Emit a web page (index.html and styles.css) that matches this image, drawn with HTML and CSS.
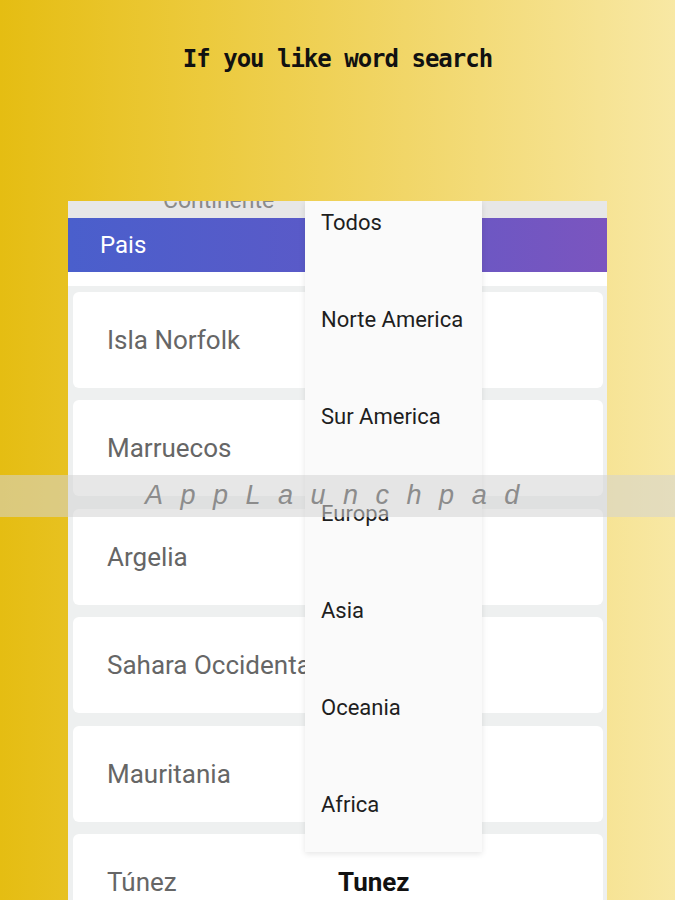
FILE: index.html
```html
<!DOCTYPE html>
<html lang="en">
<head>
    <meta charset="UTF-8">
    <meta name="viewport" content="width=device-width, initial-scale=1.0">
    <title>Word Search - Paises</title>
    <link rel="stylesheet" href="styles.css">
</head>
<body>
    <div class="page">
        <h1 class="title">If you like word search</h1>

        <div class="phone">
            <div class="top-strip">
                <span class="strip-label">Continente</span>
            </div>
            <div class="tabs">
                <span class="tab-label">Pais</span>
            </div>

            <div class="list">
                <div class="card"><span class="name">Isla Norfolk</span></div>
                <div class="card"><span class="name">Marruecos</span></div>
                <div class="card"><span class="name">Argelia</span></div>
                <div class="card"><span class="name">Sahara Occidental</span></div>
                <div class="card"><span class="name">Mauritania</span></div>
                <div class="card">
                    <span class="name">Túnez</span>
                    <span class="answer">Tunez</span>
                </div>
            </div>

            <!-- continent dropdown, open -->
            <div class="dropdown">
                <ul class="menu">
                    <li>Todos</li>
                    <li>Norte America</li>
                    <li>Sur America</li>
                    <li>Europa</li>
                    <li>Asia</li>
                    <li>Oceania</li>
                    <li>Africa</li>
                </ul>
            </div>
        </div>

        <div class="watermark">AppLaunchpad</div>
    </div>
</body>
</html>
```

FILE: styles.css
```css
html, body {
    margin: 0;
    padding: 0;
}

body {
    font-family: Roboto, "Noto Sans", sans-serif;
}

.page {
    position: relative;
    width: 675px;
    height: 900px;
    overflow: hidden;
    background: linear-gradient(90deg, #e5bd12 0%, #ecca3c 30%, #f1d668 60%, #f8e8a4 100%);
}

.title {
    margin: 0;
    padding-top: 45px;
    height: 201px;
    box-sizing: border-box;
    text-align: center;
    font-family: "DejaVu Sans Mono", monospace;
    font-weight: bold;
    font-size: 24px;
    letter-spacing: -1px;
    color: #111;
}

.phone {
    position: relative;
    margin: 0 68px;
    height: 699px;
    background: #fff;
    overflow: hidden;
}

.top-strip {
    height: 17px;
    background: #e7e7e7;
    overflow: hidden;
}

.strip-label {
    display: block;
    margin-top: -13px;
    padding-left: 95px;
    font-size: 23px;
    line-height: 26px;
    color: #8a8a8a;
}

.tabs {
    height: 54px;
    display: flex;
    align-items: center;
    padding-left: 32px;
    background: linear-gradient(90deg, #4a5fcc 0%, #5a5ac8 45%, #7b55bf 100%);
}

.tab-label {
    color: #fff;
    font-size: 24px;
}

.list {
    margin-top: 14px;
    padding: 6px 4px 0 5px;
    background: #eef0f0;
}

.card {
    height: 96px;
    margin-bottom: 12.4px;
    display: flex;
    align-items: center;
    padding-left: 34px;
    background: #fff;
    border-radius: 6px;
    white-space: nowrap;
}

.name {
    width: 231px;
    font-size: 26px;
    color: #666;
}

.answer {
    font-size: 26px;
    font-weight: bold;
    color: #111;
}

.dropdown {
    position: absolute;
    top: 0;
    left: 237px;
    width: 177px;
    height: 651px;
    background: #fafafa;
    box-shadow: 0 2px 6px rgba(0, 0, 0, 0.1);
    overflow: hidden;
}

.menu {
    list-style: none;
    margin: -27px 0 0 0;
    padding: 0;
}

.menu li {
    height: 97px;
    line-height: 97px;
    padding-left: 16px;
    font-size: 22px;
    color: #1e1e1e;
}

.watermark {
    position: absolute;
    left: 0;
    right: 0;
    top: 475px;
    height: 42px;
    line-height: 40px;
    padding-left: 145px;
    background: rgba(212, 212, 212, 0.55);
    font-family: "Liberation Sans", Arial, sans-serif;
    font-style: italic;
    font-size: 27px;
    letter-spacing: 17.5px;
    color: #8c8c8c;
}
```
